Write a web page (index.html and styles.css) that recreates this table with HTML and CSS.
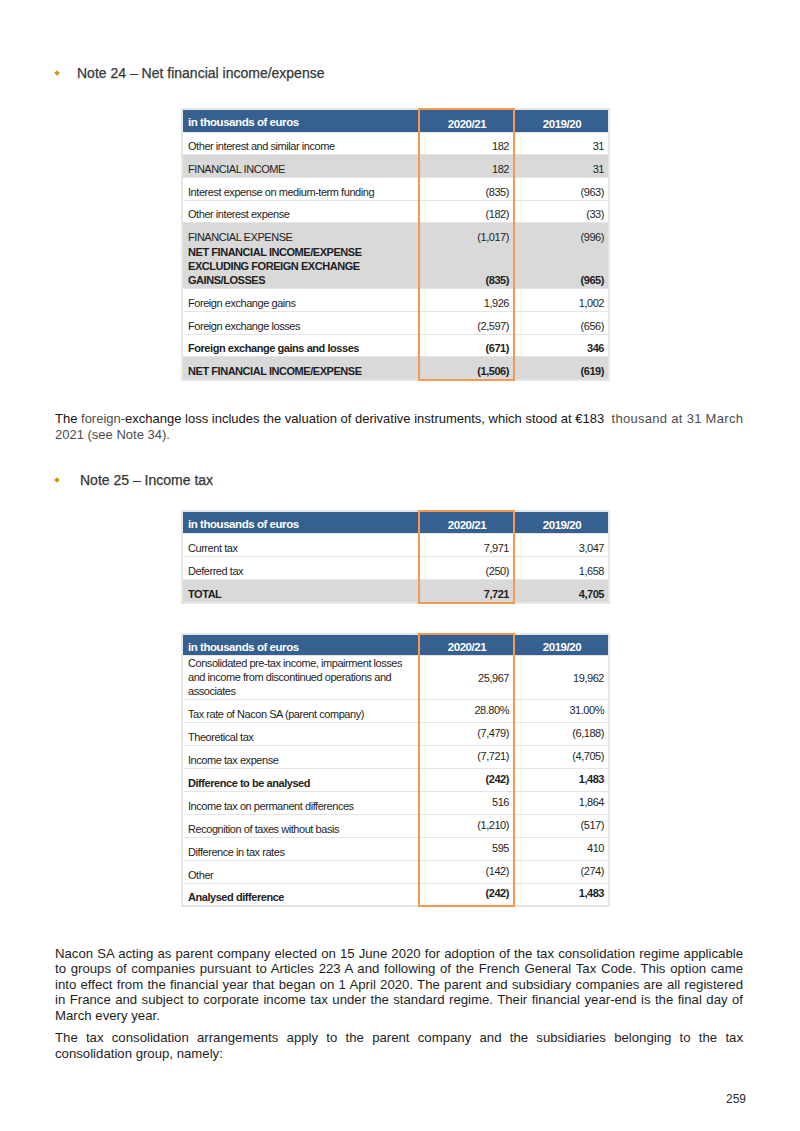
FILE: index.html
```html
<!DOCTYPE html>
<html lang="en">
<head>
<meta charset="utf-8">
<title>Notes 24-25</title>
<link rel="stylesheet" href="styles.css">
</head>
<body>
<div class="page">
  <h2 class="note note-24"><span class="bullet"></span><span class="note-title">Note 24 – Net financial income/expense</span></h2>

  <table class="fin t1">
    <colgroup><col class="c-label"><col class="c-num"><col class="c-num"></colgroup>
    <tr class="head h23">
      <th class="lbl">in thousands of euros</th><th class="yr cur">2020/21</th><th class="yr">2019/20</th>
    </tr>
    <tr class="r22"><td class="lbl">Other interest and similar income</td><td class="num cur">182</td><td class="num">31</td></tr>
    <tr class="r23 grey"><td class="lbl">FINANCIAL INCOME</td><td class="num cur">182</td><td class="num">31</td></tr>
    <tr class="r23"><td class="lbl">Interest expense on medium-term funding</td><td class="num cur">(835)</td><td class="num">(963)</td></tr>
    <tr class="r22"><td class="lbl">Other interest expense</td><td class="num cur">(182)</td><td class="num">(33)</td></tr>
    <tr class="r23 grey nosep"><td class="lbl">FINANCIAL EXPENSE</td><td class="num cur">(1,017)</td><td class="num">(996)</td></tr>
    <tr class="r41 grey bold"><td class="lbl multi">NET FINANCIAL INCOME/EXPENSE<br>EXCLUDING FOREIGN EXCHANGE<br>GAINS/LOSSES</td><td class="num cur">(835)</td><td class="num">(965)</td></tr>
    <tr class="r23"><td class="lbl">Foreign exchange gains</td><td class="num cur">1,926</td><td class="num">1,002</td></tr>
    <tr class="r23"><td class="lbl">Foreign exchange losses</td><td class="num cur">(2,597)</td><td class="num">(656)</td></tr>
    <tr class="r22 bold"><td class="lbl">Foreign exchange gains and losses</td><td class="num cur">(671)</td><td class="num">346</td></tr>
    <tr class="r23 grey bold last"><td class="lbl">NET FINANCIAL INCOME/EXPENSE</td><td class="num cur">(1,506)</td><td class="num">(619)</td></tr>
  </table>

  <p class="para p1"><span class="dk">The</span> <span class="gr">foreign-</span><span class="tight">exchange loss includes the valuation of derivative instruments, which stood at €183</span>&nbsp; <span class="gr wide">thousand at 31 March</span><br><span class="gr">2021 (see Note 34).</span></p>

  <h2 class="note note-25"><span class="bullet"></span><span class="note-title">Note 25 – Income tax</span></h2>

  <table class="fin t2">
    <colgroup><col class="c-label"><col class="c-num"><col class="c-num"></colgroup>
    <tr class="head h23">
      <th class="lbl">in thousands of euros</th><th class="yr cur">2020/21</th><th class="yr">2019/20</th>
    </tr>
    <tr class="r23"><td class="lbl">Current tax</td><td class="num cur">7,971</td><td class="num">3,047</td></tr>
    <tr class="r23"><td class="lbl">Deferred tax</td><td class="num cur">(250)</td><td class="num">1,658</td></tr>
    <tr class="r23 grey bold last"><td class="lbl">TOTAL</td><td class="num cur">7,721</td><td class="num">4,705</td></tr>
  </table>

  <table class="fin t3">
    <colgroup><col class="c-label"><col class="c-num"><col class="c-num"></colgroup>
    <tr class="head h22">
      <th class="lbl">in thousands of euros</th><th class="yr cur">2020/21</th><th class="yr">2019/20</th>
    </tr>
    <tr class="r42"><td class="lbl multi">Consolidated pre-tax income, impairment losses<br>and income from discontinued operations and<br>associates</td><td class="num cur">25,967</td><td class="num">19,962</td></tr>
    <tr class="r23"><td class="lbl">Tax rate of Nacon SA (parent company)</td><td class="num cur">28.80%</td><td class="num">31.00%</td></tr>
    <tr class="r23"><td class="lbl">Theoretical tax</td><td class="num cur">(7,479)</td><td class="num">(6,188)</td></tr>
    <tr class="r23"><td class="lbl">Income tax expense</td><td class="num cur">(7,721)</td><td class="num">(4,705)</td></tr>
    <tr class="r23 bold"><td class="lbl">Difference to be analysed</td><td class="num cur">(242)</td><td class="num">1,483</td></tr>
    <tr class="r23"><td class="lbl">Income tax on permanent differences</td><td class="num cur">516</td><td class="num">1,864</td></tr>
    <tr class="r23"><td class="lbl">Recognition of taxes without basis</td><td class="num cur">(1,210)</td><td class="num">(517)</td></tr>
    <tr class="r23"><td class="lbl">Difference in tax rates</td><td class="num cur">595</td><td class="num">410</td></tr>
    <tr class="r23"><td class="lbl">Other</td><td class="num cur">(142)</td><td class="num">(274)</td></tr>
    <tr class="r22 bold last"><td class="lbl">Analysed difference</td><td class="num cur">(242)</td><td class="num">1,483</td></tr>
  </table>

  <p class="para p2">Nacon SA acting as parent company elected on 15 June 2020 for adoption of the tax consolidation regime applicable to groups of companies pursuant to Articles 223 A and following of the French General Tax Code. This option came into effect from the financial year that began on 1 April 2020. The parent and subsidiary companies are all registered in France and subject to corporate income tax under the standard regime. Their financial year-end is the final day of March every year.</p>

  <p class="para p3">The tax consolidation arrangements apply to the parent company and the subsidiaries belonging to the tax consolidation group, namely:</p>

  <div class="page-num">259</div>
</div>
</body>
</html>
```

FILE: styles.css
```css
html, body {
  margin: 0;
  padding: 0;
  background: #ffffff;
}

.page {
  width: 688px;
  padding: 65px 57px 0 55px;
  font-family: "Liberation Sans", Arial, sans-serif;
  color: #222222;
}

/* Section headings */
.note {
  margin: 0;
  display: flex;
  align-items: center;
  height: 16px;
  font-size: 14px;
  font-weight: normal;
  color: #363636;
  line-height: 16px;
  -webkit-text-stroke: 0.25px #363636;
}
.note .bullet {
  display: inline-block;
  width: 4px;
  height: 4px;
  background: #d9920c;
  transform: rotate(45deg);
  margin-left: 0;
}
.note-24 .note-title { margin-left: 18px; }
.note-25 .note-title { margin-left: 21px; }
.note-25 { margin-top: 29px; }

/* Tables */
.fin {
  margin-left: 126px;
  width: 427px;
  border-collapse: collapse;
  table-layout: fixed;
  font-family: "Liberation Sans", Arial, sans-serif;
  font-size: 11px;
  letter-spacing: -0.45px;
  color: #1e1e1e;
  border: 2px solid #e6e6e6;
}
.fin col.c-label { width: 237px; }
.fin col.c-num { width: 95px; }

.t1 { margin-top: 27px; }
.t2 { margin-top: 22px; }
.t3 { margin-top: 29px; }

.fin tr { border-bottom: 1px solid #e4e4e4; }
.fin tr.nosep { border-bottom: none; }
.fin tr.last { border-bottom: none; }

.fin th, .fin td {
  padding: 0 4px 1px 5px;
  line-height: 14px;
  vertical-align: bottom;
}

.fin .head {
  background: #36608f;
  color: #ffffff;
}
.fin .head th {
  font-weight: bold;
  font-size: 11.5px;
  text-align: center;
  padding-bottom: 1px;
}
.fin .head th.lbl {
  text-align: left;
  vertical-align: top;
  padding-top: 5px;
}

.fin .h24 { height: 24px; }
.fin .h23 { height: 23px; }
.fin .h22 { height: 22px; }
.fin .r22 { height: 22px; }
.fin .r23 { height: 23px; }
.fin .r24 { height: 24px; }
.fin .r41 { height: 41px; }
.fin .r42 { height: 42px; }

.fin .grey { background: #d9d9d9; }
.fin .bold td { font-weight: bold; }

.fin td.num { text-align: right; }
.fin td.lbl.multi { padding-bottom: 1px; }

.t3 td.num { vertical-align: middle; padding-bottom: 3px; }
.t3 .r42 td.num { padding-bottom: 0; }

/* highlighted current-year column */
.fin .cur {
  border-left: 2px solid #f4994f;
  border-right: 2px solid #f4994f;
}
.fin .head .cur { border-top: 2px solid #f4994f; }
.fin .last .cur { border-bottom: 2px solid #f4994f; }

/* Paragraphs */
.para {
  margin: 0;
  font-size: 13px;
}
.p1 {
  margin-top: 30px;
  line-height: 16px;
  color: #1c1c1c;
  white-space: nowrap;
}
.p1 .gr { color: #4d4d4d; }
.p1 .dk { color: #111111; }
.p1 .tight { color: #151515; }
.p1 .wide { letter-spacing: 0.3px; }

.p2 {
  margin-top: 39px;
  font-size: 13.2px;
  line-height: 15.5px;
  text-align: justify;
  color: #1e1e1e;
}
.p3 {
  margin-top: 7px;
  font-size: 13.2px;
  line-height: 15.5px;
  text-align: justify;
  color: #1e1e1e;
}

.page-num {
  margin-top: 30px;
  margin-right: -3px;
  text-align: right;
  font-size: 12px;
  line-height: 16px;
  color: #2a2a2a;
}
```
